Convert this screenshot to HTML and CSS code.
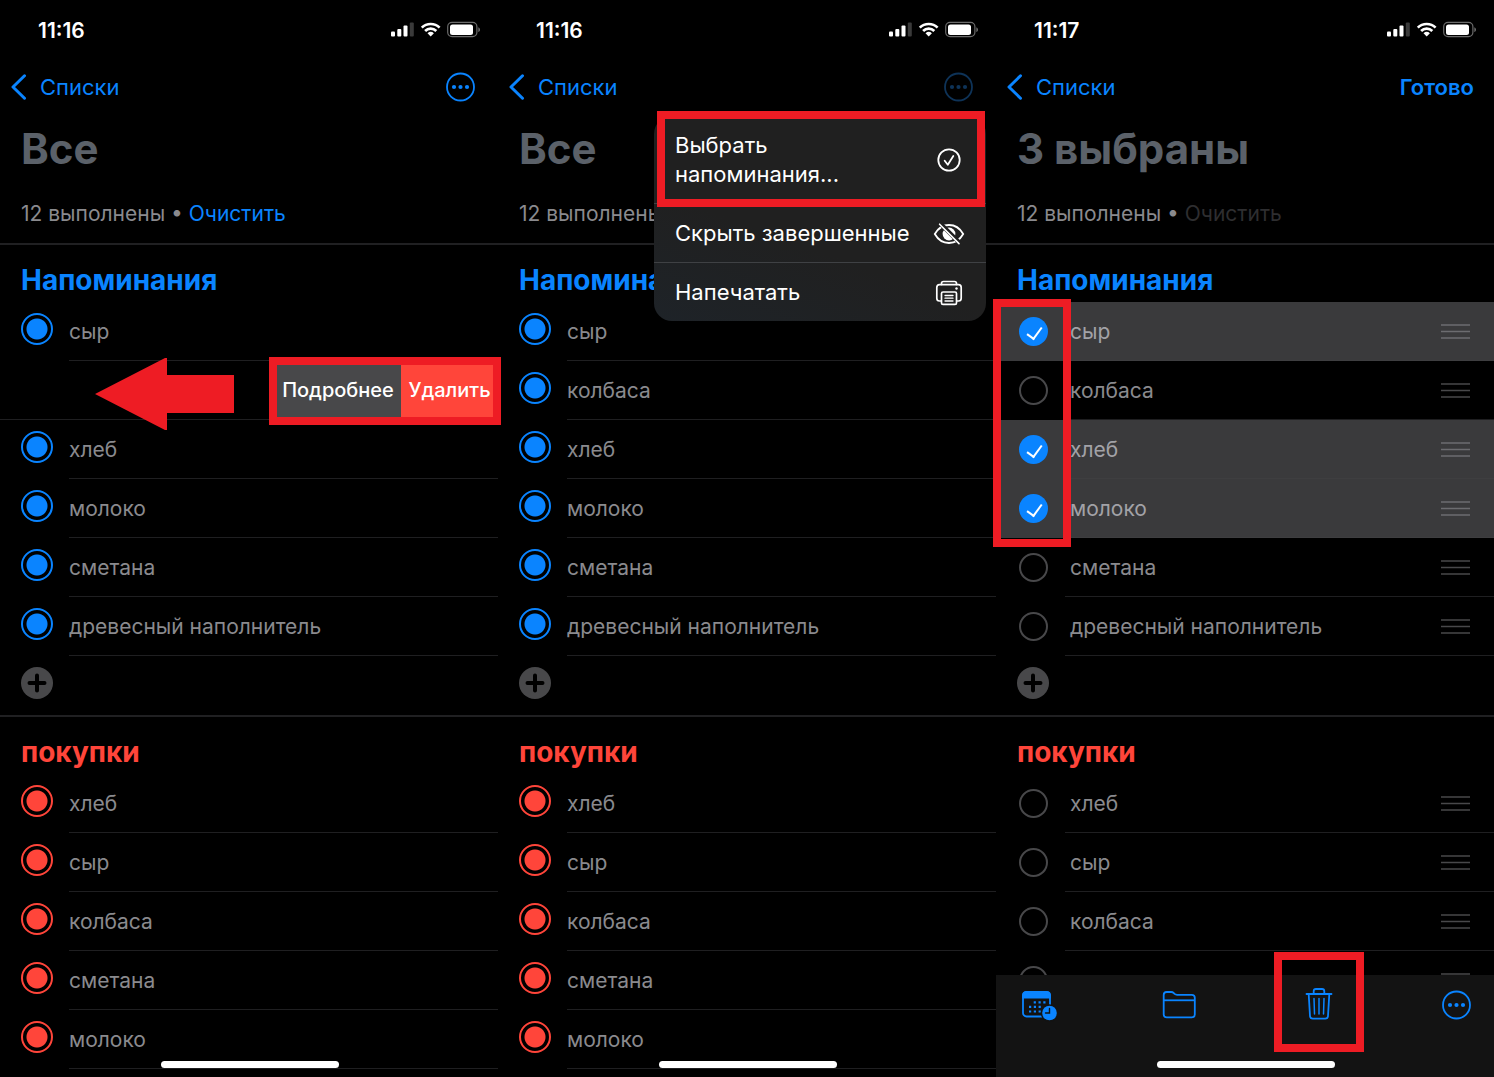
FILE: index.html
```html
<!DOCTYPE html>
<html lang="ru">
<head>
    <meta charset="UTF-8">
    <meta name="viewport" content="width=device-width, initial-scale=1.0">
    <title>Напоминания</title>
    <link rel="stylesheet" href="styles.css">
</head>
<body>
    <!-- shared icons -->
    <svg class="sprite" aria-hidden="true">
        <symbol id="status" viewBox="0 0 90 20">
            <g fill="#fff">
                <rect x="0" y="11.5" width="4" height="5" rx="1"/>
                <rect x="6.3" y="9" width="4" height="7.5" rx="1"/>
                <rect x="12.5" y="5.5" width="4" height="11" rx="1"/>
                <rect x="18.8" y="2.5" width="4" height="14" rx="1" fill="#3a3a3a"/>
                <rect x="59" y="4.5" width="23" height="10.5" rx="2.5"/>
                <path d="M39.7 16.5l3.2-3.3a4.7 4.7 0 0 0-6.4 0z"/>
            </g>
            <path d="M30.8 7.6a12.8 12.8 0 0 1 17.8 0M34.1 11a8 8 0 0 1 11.2 0" fill="none" stroke="#fff" stroke-width="2.7"/>
            <rect x="56.7" y="2.4" width="29.2" height="14.2" rx="4.3" fill="none" stroke="#6b6b6b" stroke-width="1.2"/>
            <path d="M87.3 7.2c2.3.8 2.3 4 0 4.8z" fill="#6b6b6b"/>
        </symbol>
        <symbol id="back" viewBox="0 0 16 26">
            <path d="M13.5 1.8L2 13l11.500 11.2" fill="none" stroke="currentColor" stroke-width="3" stroke-linecap="round" stroke-linejoin="round"/>
        </symbol>
        <symbol id="more" viewBox="0 0 34 34">
            <circle cx="16.5" cy="17" r="13.5" fill="none" stroke="currentColor" stroke-width="1.8"/>
            <g fill="currentColor">
                <circle cx="10" cy="17" r="2.1"/>
                <circle cx="16.5" cy="17" r="2.1"/>
                <circle cx="23" cy="17" r="2.1"/>
            </g>
        </symbol>
        <symbol id="plus" viewBox="0 0 32 32">
            <circle cx="16" cy="16" r="16" fill="#48484a"/>
            <path d="M16 8.5v15M8.5 16h15" stroke="#000" stroke-width="4" stroke-linecap="round"/>
        </symbol>
        <symbol id="grip" viewBox="0 0 29 16">
            <path d="M0 2h29M0 8.5h29M0 15h29" stroke="currentColor" stroke-width="1.6"/>
        </symbol>
    </svg>

    <main class="screens">
        <!-- swipe to delete -->
        <div class="phone">
            <header class="status-bar">
                <time>11:16</time>
                <svg width="90" height="20"><use href="#status"/></svg>
            </header>
            <nav class="nav">
                <a href="#" class="back"><svg width="16" height="26"><use href="#back"/></svg>Списки</a>
                <button class="icon-btn" aria-label="Ещё"><svg width="34" height="34"><use href="#more"/></svg></button>
            </nav>
            <h1>Все</h1>
            <p class="summary">12 выполнены • <a href="#">Очистить</a></p>

            <section class="group blue">
                <h2>Напоминания</h2>
                <ul>
                    <li><label><input type="checkbox" checked><span class="text">сыр</span></label></li>
                    <li class="swiped">
                        <svg class="arrow" width="140" height="74" viewBox="0 0 140 74">
                            <path d="M1 37L71 1h2v17h67v38H73v17h-2z" fill="#ee1c24"/>
                        </svg>
                        <div class="actions">
                            <button class="details">Подробнее</button>
                            <button class="delete">Удалить</button>
                        </div>
                        <span class="frame frame-swipe"></span>
                    </li>
                    <li><label><input type="checkbox" checked><span class="text">хлеб</span></label></li>
                    <li><label><input type="checkbox" checked><span class="text">молоко</span></label></li>
                    <li><label><input type="checkbox" checked><span class="text">сметана</span></label></li>
                    <li><label><input type="checkbox" checked><span class="text">древесный наполнитель</span></label></li>
                </ul>
                <button class="add" aria-label="Добавить"><svg width="32" height="32"><use href="#plus"/></svg></button>
            </section>

            <section class="group red">
                <h2>покупки</h2>
                <ul>
                    <li><label><input type="checkbox" checked><span class="text">хлеб</span></label></li>
                    <li><label><input type="checkbox" checked><span class="text">сыр</span></label></li>
                    <li><label><input type="checkbox" checked><span class="text">колбаса</span></label></li>
                    <li><label><input type="checkbox" checked><span class="text">сметана</span></label></li>
                    <li><label><input type="checkbox" checked><span class="text">молоко</span></label></li>
                </ul>
            </section>
            <span class="home-bar"></span>
        </div>

        <!-- context menu -->
        <div class="phone dimmed">
            <header class="status-bar">
                <time>11:16</time>
                <svg width="90" height="20"><use href="#status"/></svg>
            </header>
            <nav class="nav">
                <a href="#" class="back"><svg width="16" height="26"><use href="#back"/></svg>Списки</a>
                <button class="icon-btn" aria-label="Ещё"><svg width="34" height="34"><use href="#more"/></svg></button>
            </nav>
            <h1>Все</h1>
            <p class="summary">12 выполнены • <a href="#">Очистить</a></p>

            <section class="group blue">
                <h2>Напоминания</h2>
                <ul>
                    <li><label><input type="checkbox" checked><span class="text">сыр</span></label></li>
                    <li><label><input type="checkbox" checked><span class="text">колбаса</span></label></li>
                    <li><label><input type="checkbox" checked><span class="text">хлеб</span></label></li>
                    <li><label><input type="checkbox" checked><span class="text">молоко</span></label></li>
                    <li><label><input type="checkbox" checked><span class="text">сметана</span></label></li>
                    <li><label><input type="checkbox" checked><span class="text">древесный наполнитель</span></label></li>
                </ul>
                <button class="add" aria-label="Добавить"><svg width="32" height="32"><use href="#plus"/></svg></button>
            </section>

            <section class="group red">
                <h2>покупки</h2>
                <ul>
                    <li><label><input type="checkbox" checked><span class="text">хлеб</span></label></li>
                    <li><label><input type="checkbox" checked><span class="text">сыр</span></label></li>
                    <li><label><input type="checkbox" checked><span class="text">колбаса</span></label></li>
                    <li><label><input type="checkbox" checked><span class="text">сметана</span></label></li>
                    <li><label><input type="checkbox" checked><span class="text">молоко</span></label></li>
                </ul>
            </section>

            <div class="menu">
                <button>
                    <span>Выбрать<br>напоминания...</span>
                    <svg width="32" height="28" viewBox="0 0 32 28" fill="none" stroke="#fff" stroke-width="1.8" stroke-linecap="round" stroke-linejoin="round">
                        <circle cx="16" cy="14" r="10.7"/>
                        <path d="M11.7 14.8l3.1 3.9 5.5-8.7"/>
                    </svg>
                </button>
                <button>
                    <span>Скрыть завершенные</span>
                    <svg width="32" height="28" viewBox="0 0 32 28" fill="none" stroke="#fff" stroke-width="1.8" stroke-linecap="round">
                        <path d="M1.8 14C5 8.4 10 5 16 5s11 3.4 14.2 9C27 19.6 22 23 16 23S5 19.6 1.8 14z"/>
                        <circle cx="16" cy="14" r="6.4" fill="#fff" stroke="none"/>
                        <path d="M7.500 3.800l19 19" stroke="#202020" stroke-width="4.4"/>
                        <path d="M6.6 4.2L26 23.6" stroke-width="1.6"/>
                    </svg>
                </button>
                <button>
                    <span>Напечатать</span>
                    <svg width="32" height="28" viewBox="0 0 32 28" fill="none" stroke="#fff" stroke-width="1.7" stroke-linecap="round" stroke-linejoin="round">
                        <path d="M8.5 5.500V4.500q0-2 2-2h11q2 0 2 2v1"/>
                        <path d="M8 22H6.500q-2.700 0-2.700-2.700V8.500q0-2.800 2.700-2.800h19q2.700 0 2.700 2.800v10.800q0 2.700-2.700 2.700H24"/>
                        <rect x="8.500" y="13" width="15" height="12.400" rx="1.500"/>
                        <path d="M12 16.500h8M12 19.200h8M12 22h8" stroke-width="1.300"/>
                        <circle cx="23.500" cy="9.500" r="1.200" fill="#fff" stroke="none"/>
                    </svg>
                </button>
                <span class="frame frame-menu"></span>
            </div>
            <span class="home-bar"></span>
        </div>

        <!-- multiple selection -->
        <div class="phone editing">
            <header class="status-bar">
                <time>11:17</time>
                <svg width="90" height="20"><use href="#status"/></svg>
            </header>
            <nav class="nav">
                <a href="#" class="back"><svg width="16" height="26"><use href="#back"/></svg>Списки</a>
                <button class="done">Готово</button>
            </nav>
            <h1>3 выбраны</h1>
            <p class="summary">12 выполнены • <a href="#">Очистить</a></p>

            <section class="group blue">
                <h2>Напоминания</h2>
                <ul>
                    <li class="selected"><label><input type="checkbox" checked><span class="text">сыр<svg width="29" height="16"><use href="#grip"/></svg></span></label></li>
                    <li><label><input type="checkbox"><span class="text">колбаса<svg width="29" height="16"><use href="#grip"/></svg></span></label></li>
                    <li class="selected"><label><input type="checkbox" checked><span class="text">хлеб<svg width="29" height="16"><use href="#grip"/></svg></span></label></li>
                    <li class="selected"><label><input type="checkbox" checked><span class="text">молоко<svg width="29" height="16"><use href="#grip"/></svg></span></label></li>
                    <li><label><input type="checkbox"><span class="text">сметана<svg width="29" height="16"><use href="#grip"/></svg></span></label></li>
                    <li><label><input type="checkbox"><span class="text">древесный наполнитель<svg width="29" height="16"><use href="#grip"/></svg></span></label></li>
                </ul>
                <span class="frame frame-select"></span>
                <button class="add" aria-label="Добавить"><svg width="32" height="32"><use href="#plus"/></svg></button>
            </section>

            <section class="group red">
                <h2>покупки</h2>
                <ul>
                    <li><label><input type="checkbox"><span class="text">хлеб<svg width="29" height="16"><use href="#grip"/></svg></span></label></li>
                    <li><label><input type="checkbox"><span class="text">сыр<svg width="29" height="16"><use href="#grip"/></svg></span></label></li>
                    <li><label><input type="checkbox"><span class="text">колбаса<svg width="29" height="16"><use href="#grip"/></svg></span></label></li>
                    <li><label><input type="checkbox"><span class="text">сметана<svg width="29" height="16"><use href="#grip"/></svg></span></label></li>
                </ul>
            </section>

            <footer class="toolbar">
                <button aria-label="Дата">
                    <svg width="36" height="34" viewBox="0 0 36 34">
                        <rect x="1" y="4" width="27" height="24.500" rx="3.500" fill="none" stroke="currentColor" stroke-width="1.800"/>
                        <path d="M.1 10.500V7q0-3.800 3.800-3.800h21.200q3.800 0 3.800 3.800v3.500z" fill="currentColor"/>
                        <path d="M11.700 14.300h12M7 18.900h12M7 23.500h12" fill="none" stroke="currentColor" stroke-width="2.200" stroke-dasharray="2.200 2.600"/>
                        <circle cx="27.500" cy="25" r="8.700" fill="#131313"/>
                        <circle cx="27.500" cy="25" r="7.300" fill="currentColor"/>
                        <path d="M27.500 20.500V25h-4" fill="none" stroke="#131313" stroke-width="1.400" stroke-linecap="round"/>
                    </svg>
                </button>
                <button aria-label="Переместить">
                    <svg width="36" height="34" viewBox="0 0 36 34" fill="none" stroke="currentColor" stroke-width="1.800" stroke-linejoin="round">
                        <path d="M2.700 26.500V7q0-3 3-3h4.500q1.500 0 2.600 1.100l.800.800q1 .900 2.500.900h14.700q3 0 3 3v16.700q0 2.800-3 2.800H5.700q-3 0-3-2.800z"/>
                        <path d="M2.700 12.300h31"/>
                    </svg>
                </button>
                <button class="trash" aria-label="Удалить">
                    <svg width="36" height="34" viewBox="0 0 36 34" fill="none" stroke="currentColor" stroke-width="1.800" stroke-linecap="round" stroke-linejoin="round">
                        <path d="M5.500 6h25M12.700 5.800V3.300q0-2.300 2.300-2.300h6q2.300 0 2.300 2.300v2.500"/>
                        <path d="M7.700 6.200L9 28q.2 2.700 2.800 2.700h12.400Q26.800 30.700 27 28l1.300-21.800"/>
                        <path d="M13 10.500l.5 15.500M18 10.500V26M23 10.500L22.500 26" stroke-width="1.500"/>
                    </svg>
                    <span class="frame frame-trash"></span>
                </button>
                <button aria-label="Ещё"><svg width="34" height="34"><use href="#more"/></svg></button>
            </footer>
            <span class="home-bar"></span>
        </div>
    </main>
</body>
</html>
```
FILE: styles.css
```css
* {
    box-sizing: border-box;
}
body {
    margin: 0;
    background: #000;
    color: #fff;
    font-family: Inter, "Liberation Sans", sans-serif;
    font-size: 22px;
}
h1, h2, p, ul {
    margin: 0;
    padding: 0;
}
ul {
    list-style: none;
}
a {
    color: #0a84ff;
    text-decoration: none;
}
button {
    padding: 0;
    border: none;
    background: none;
    color: #0a84ff;
    font: inherit;
    cursor: pointer;
}
svg {
    display: block;
    flex: none;
}
.sprite {
    display: none;
}
.screens {
    display: grid;
    grid-template-columns: repeat(3, 1fr);
    min-height: 100vh;
    overflow: hidden;
}
.phone {
    position: relative;
}

/* header */
.status-bar {
    display: flex;
    align-items: center;
    justify-content: space-between;
    height: 60px;
    padding: 0 17px 0 38px;
    font-size: 21px;
    font-weight: 600;
}
.nav {
    display: flex;
    align-items: center;
    justify-content: space-between;
    height: 54px;
    padding: 0 20px 0 11px;
}
.back {
    display: flex;
    align-items: center;
    gap: 13px;
}
.done {
    font-weight: 600;
}
.dimmed .icon-btn {
    color: #0e3358;
}
h1 {
    padding-left: 21px;
    color: #5b6169;
    font-size: 42px;
    font-weight: 700;
    line-height: 70px;
}
.summary {
    padding-left: 21px;
    color: #8a8a8e;
    font-size: 21px;
    line-height: 59px;
}
.editing .summary a {
    color: #2e2e30;
}

/* lists */
.group {
    position: relative;
    border-top: 2px solid #202022;
}
.group h2 {
    padding: 15px 21px 2px;
    font-size: 28px;
    font-weight: 700;
    line-height: 40px;
}
.blue {
    color: #0a84ff;
}
.red {
    color: #ff453a;
}
.group li {
    position: relative;
    height: 59px;
    font-size: 21px;
}
.group label {
    display: flex;
    align-items: center;
    gap: 16px;
    height: 100%;
    padding-left: 21px;
}
.group input {
    flex: none;
    width: 32px;
    height: 32px;
    margin: 0 0 6px;
    border: 2px solid currentColor;
    border-radius: 50%;
    appearance: none;
    color: inherit;
    background: radial-gradient(circle, currentColor 10px, transparent 11px);
}
.text {
    display: flex;
    flex: 1;
    align-items: center;
    justify-content: space-between;
    height: 100%;
    border-bottom: 1px solid #1f1f21;
    color: #8a8a8e;
}
.add {
    display: flex;
    height: 59px;
    padding: 11px 21px;
}

/* swiped row */
.swiped {
    display: flex;
    align-items: center;
    justify-content: flex-end;
    border-bottom: 1px solid #1f1f21;
}
.arrow {
    position: absolute;
    top: -4px;
    left: 94px;
}
.actions {
    display: flex;
    height: 100%;
}
.actions button {
    color: #fff;
    font-size: 20px;
    font-weight: 500;
}
.actions .details {
    width: 128px;
    padding-left: 2px;
    background: #48484a;
}
.actions .delete {
    width: 97px;
    background: #ff453a;
}

/* edit mode */
.editing label {
    gap: 17px;
    padding-left: 23px;
}
.editing input {
    width: 29px;
    height: 29px;
    margin: 0;
    border-color: #48484a;
    background: none;
}
.editing input:checked {
    border: none;
    background: #0a84ff;
}
.editing input:checked::before {
    content: "";
    display: block;
    width: 7px;
    height: 13px;
    margin: 7px 0 0 11px;
    border: solid #fff;
    border-width: 0 2px 2px 0;
    transform: rotate(36deg);
}
.editing .text {
    padding: 0 24px 0 5px;
}
.editing .text svg {
    color: #48484a;
}
.editing .selected {
    background: #3a3a3c;
}
.editing .selected .text {
    border-color: #3e3e40;
    color: #a2a2a7;
}
.editing .selected svg {
    color: #6c6c70;
}
.toolbar {
    position: absolute;
    right: 0;
    bottom: 0;
    left: 0;
    display: flex;
    align-items: flex-start;
    justify-content: space-between;
    height: 102px;
    padding: 13px 20px 0 26px;
    background: #131313;
}
.trash {
    position: relative;
}

/* popup menu */
.menu {
    position: absolute;
    top: 116px;
    right: 10px;
    width: 332px;
    border-radius: 18px;
    background: linear-gradient(20deg, #1e2328, #202020 40%);
}
.menu button {
    display: flex;
    align-items: center;
    justify-content: space-between;
    width: 100%;
    padding: 15px 21px 14px;
    color: #fff;
    line-height: 29px;
    text-align: left;
}
.menu button + button {
    border-top: 1px solid #3f4144;
}

/* red highlight frames */
.frame {
    position: absolute;
    z-index: 2;
    border: 8px solid #ee1c24;
    pointer-events: none;
}
.frame-swipe {
    top: -4px;
    right: -3px;
    width: 232px;
    height: 68px;
}
.frame-menu {
    top: -5px;
    right: 1px;
    width: 328px;
    height: 96px;
}
.frame-select {
    top: 54px;
    left: -3px;
    width: 78px;
    height: 248px;
}
.frame-trash {
    top: -36px;
    left: -27px;
    width: 90px;
    height: 100px;
}
.home-bar {
    position: absolute;
    bottom: 9px;
    left: 50%;
    width: 178px;
    height: 7px;
    margin-left: -88px;
    border-radius: 4px;
    background: #fff;
}
```
